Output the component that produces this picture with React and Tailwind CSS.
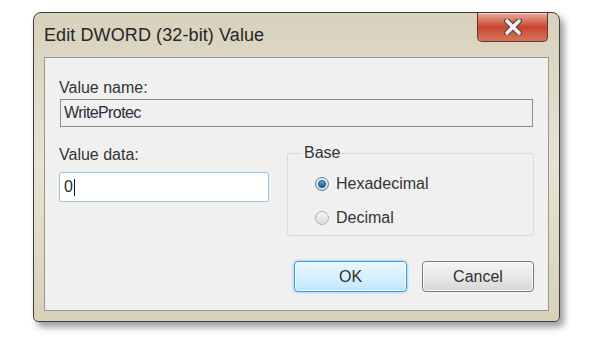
import React from 'react'

function Radio({ checked }) {
  return (
    <span
      className={`w-[14px] h-[14px] rounded-full border flex items-center justify-center ${
        checked
          ? 'border-[#5a7f9c] bg-gradient-to-b from-[#e9f1f8] to-[#c9dbea]'
          : 'border-[#a9b1b8] bg-gradient-to-b from-[#f4f4f4] to-[#dcdcdc]'
      }`}
    >
      {checked && (
        <span className="w-[8px] h-[8px] rounded-full bg-gradient-to-b from-[#5fa6d6] to-[#1d5f8f] border border-[#1f4e73]" />
      )}
    </span>
  )
}

function CloseButton() {
  return (
    <div className="w-[71px] h-[29px] rounded-b-[5px] border border-t-0 border-[#5b3a33] bg-gradient-to-b from-[#e9a899] via-[#c8452f] to-[#d9735a] flex items-center justify-center shadow-[inset_0_1px_0_rgba(255,255,255,0.5)]">
      <svg width="18" height="16" viewBox="0 0 18 16">
        <path d="M3 2 L15 14 M15 2 L3 14" stroke="#5a4a48" strokeWidth="6" strokeLinecap="round" />
        <path d="M3 2 L15 14 M15 2 L3 14" stroke="#f4f2f2" strokeWidth="3.5" strokeLinecap="round" />
      </svg>
    </div>
  )
}

export default function App() {
  const font = { fontFamily: '"Liberation Sans", Arial, sans-serif' }
  return (
    <div className="w-[600px] h-[339px] bg-white pl-[33px] pt-[12px]" style={font}>
      <div className="w-[527px] h-[310px] rounded-t-[8px] rounded-b-[5px] border border-[#3d3d3d] bg-gradient-to-b from-[#d7d1bd] via-[#e7e2d3] to-[#d9d1b6] shadow-[4px_5px_7px_rgba(0,0,0,0.4)] flex flex-col px-[10px]">
        {/* Title bar */}
        <div className="h-[44px] flex items-start justify-between">
          <div className="pt-[11px] text-[18px] leading-[22px] text-[#262626] tracking-[0.1px]">
            Edit DWORD (32-bit) Value
          </div>
          <div className="mr-[1px]">
            <CloseButton />
          </div>
        </div>

        {/* Client area */}
        <div className="h-[254px] border border-[#9b978a] bg-[#f0f0f0] px-[14px] pt-[21px] text-[16px] text-[#343434]">
          <div className="h-[18px] leading-[18px]">Value name:</div>
          <div className="mt-[2px] ml-[1px] w-[473px] h-[28px] border border-[#8d8d8d] bg-[#f0f0f0] flex items-center px-[3px] text-[#2c2c3c] tracking-[-0.6px]">
            WriteProtec
          </div>

          <div className="mt-[19px] flex">
            <div className="w-[210px] flex flex-col">
              <div className="h-[18px] leading-[18px]">Value data:</div>
              <div className="mt-[8px] w-[210px] h-[30px] rounded-[2px] border border-[#9cc3de] bg-white flex items-center px-[4px] text-[#2a2a2a]">
                0<span className="w-px h-[17px] bg-[#111] ml-[1px]" />
              </div>
            </div>

            <div className="ml-[18px] mt-[7px] w-[247px] h-[83px] rounded-[3px] border border-[#dadada] relative flex flex-col pl-[27px] pt-[22px]">
              <span className="absolute left-[14px] -top-[10px] h-[18px] leading-[18px] bg-[#f0f0f0] px-[2px]">Base</span>
              <div className="flex items-center gap-[7px] h-[16px]">
                <Radio checked />
                <span>Hexadecimal</span>
              </div>
              <div className="flex items-center gap-[7px] h-[16px] mt-[18px]">
                <Radio />
                <span>Decimal</span>
              </div>
            </div>
          </div>

          <div className="mt-[25px] flex justify-end gap-[15px]">
            <div className="w-[113px] h-[31px] rounded-[4px] border border-[#3c9fd8] bg-gradient-to-b from-[#eaf6fd] via-[#d9f0fc] to-[#bee6fd] shadow-[0_0_3px_rgba(60,170,230,0.8),inset_0_0_0_1px_rgba(255,255,255,0.7)] flex items-center justify-center text-[#303030]">
              OK
            </div>
            <div className="w-[112px] h-[31px] rounded-[4px] border border-[#7a7a7a] bg-gradient-to-b from-[#f4f4f4] via-[#e8e8e8] to-[#d6d6d6] shadow-[inset_0_0_0_1px_rgba(255,255,255,0.8)] flex items-center justify-center text-[#303030]">
              Cancel
            </div>
          </div>
        </div>
      </div>
    </div>
  )
}
